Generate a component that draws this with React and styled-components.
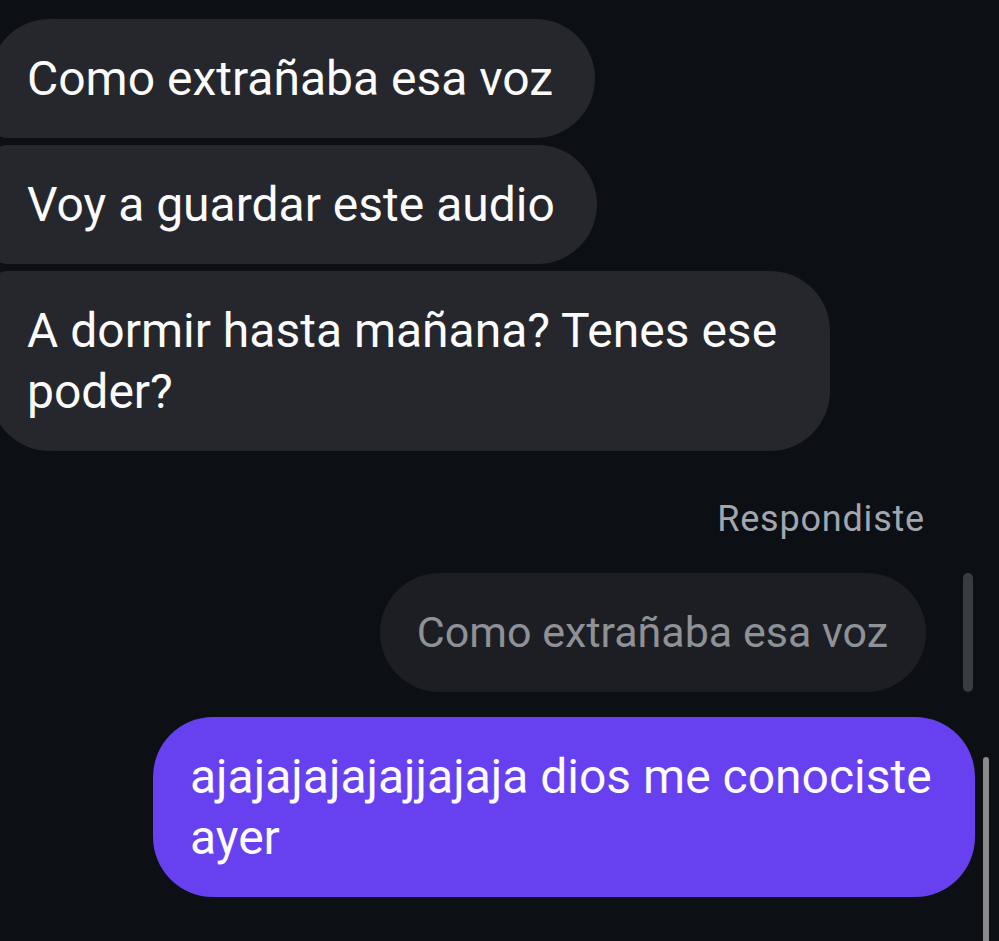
import React from 'react'
import styled, { createGlobalStyle } from 'styled-components'

const GlobalStyle = createGlobalStyle`
  html, body {
    margin: 0;
    padding: 0;
    background: #0c0f14;
  }
  body {
    font-family: Roboto, "Liberation Sans", sans-serif;
    -webkit-font-smoothing: antialiased;
  }
`

const Screen = styled.div`
  position: relative;
  width: 999px;
  height: 941px;
  overflow: hidden;
  background: #0c0f14;
  display: flex;
  flex-direction: column;
  padding-top: 19px;
  box-sizing: border-box;
`

const Group = styled.div`
  display: flex;
  flex-direction: column;
  align-items: ${(p) => (p.$mine ? 'flex-end' : 'flex-start')};
  gap: 7px;
`

const Bubble = styled.div`
  box-sizing: border-box;
  max-width: ${(p) => (p.$mine ? '822px' : '840px')};
  padding: 29px 42px 29px 37px;
  font-size: 48px;
  line-height: 61px;
  color: #fbfbfc;
  background: ${(p) => (p.$mine ? '#6741ef' : '#25272c')};
  border-radius: 60px;
  margin-left: ${(p) => (p.$mine ? '0' : '-10px')};
  margin-right: ${(p) => (p.$mine ? '24px' : '0')};
  ${(p) => !p.$mine && !p.$last && 'border-bottom-left-radius: 18px;'}
  ${(p) => !p.$mine && !p.$first && 'border-top-left-radius: 18px;'}
`

const ReplyLabel = styled.div`
  align-self: flex-end;
  margin: 48px 74px 0 0;
  font-size: 36px;
  line-height: 40px;
  letter-spacing: 0.8px;
  color: #a2a6ad;
`

const ReplyRow = styled.div`
  display: flex;
  justify-content: flex-end;
  align-items: stretch;
  gap: 37px;
  margin: 34px 26px 0 0;
`

const QuoteBubble = styled.div`
  padding: 29px 38px 29px 37px;
  font-size: 43px;
  line-height: 61px;
  color: #8e9196;
  background: #1c1e23;
  border-radius: 60px;
`

const QuoteBar = styled.div`
  width: 10px;
  border-radius: 5px;
  background: #393c41;
`

const SentWrap = styled(Group)`
  margin-top: 25px;
`

const ScrollThumb = styled.div`
  position: absolute;
  right: 10px;
  top: 757px;
  bottom: -10px;
  width: 6px;
  border-radius: 3px;
  background: #8a8a8c;
`

export default function App() {
  return (
    <>
      <GlobalStyle />
      <Screen>
        <Group>
          <Bubble $first>Como extrañaba esa voz</Bubble>
          <Bubble>Voy a guardar este audio</Bubble>
          <Bubble $last>A dormir hasta mañana? Tenes ese poder?</Bubble>
        </Group>
        <ReplyLabel>Respondiste</ReplyLabel>
        <ReplyRow>
          <QuoteBubble>Como extrañaba esa voz</QuoteBubble>
          <QuoteBar />
        </ReplyRow>
        <SentWrap $mine>
          <Bubble $mine>ajajajajajajjajaja dios me conociste ayer</Bubble>
        </SentWrap>
        <ScrollThumb />
      </Screen>
    </>
  )
}
